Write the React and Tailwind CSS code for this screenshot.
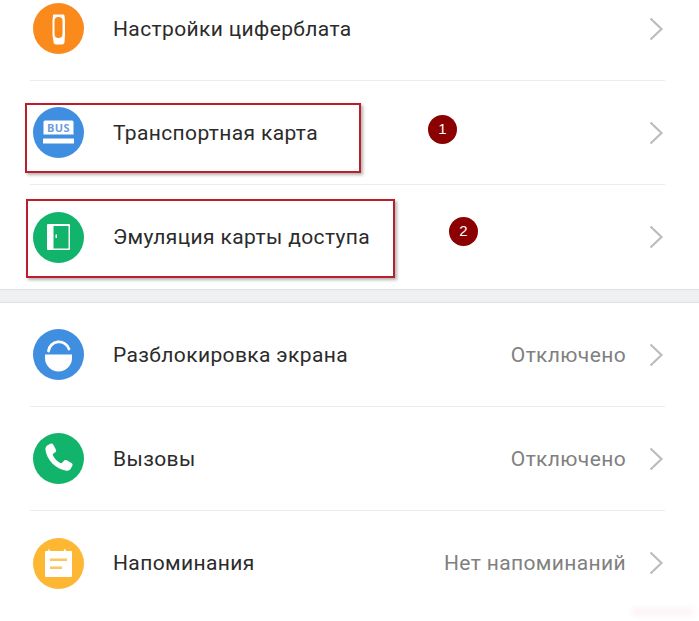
const BandIcon = () => (
  <svg width="51" height="51" viewBox="0 0 51 51">
    <path d="M21 11.500h9c1 0 1.500.6 1.500 1.500l.5 4v15l-.5 7c-.1 1.500-1 2.500-2.500 2.500h-6c-1.500 0-2.400-1-2.500-2.500L19.500 32V17l.5-4c0-.9 0-1.500 1-1.500z" fill="#fff" />
    <rect x="21.500" y="14" width="8" height="21" rx="4" fill="#fb8a1c" />
  </svg>
);

const BusIcon = () => (
  <svg width="51" height="51" viewBox="0 0 51 51">
    <path d="M10.500 15a1.500 1.500 0 0 1 1.500-1.500h27a1.500 1.500 0 0 1 1.500 1.500v12.500h-30z" fill="#fff" />
    <text x="25.500" y="25" textAnchor="middle" fontSize="11" fontWeight="700" fontFamily="'Open Sans', sans-serif" fill="#6d9fd8" letterSpacing="0.4">BUS</text>
    <rect x="10" y="31.500" width="31" height="5" rx="0.5" fill="#fff" />
  </svg>
);

const DoorIcon = () => (
  <svg width="51" height="51" viewBox="0 0 51 51">
    <rect x="14" y="12" width="23" height="26" rx="1" fill="#fff" />
    <path d="M20.500 14H35.500V36.500H20.500Z" fill="#12b36b" />
    <rect x="22.500" y="22.500" width="1.500" height="3.500" fill="#fff" />
  </svg>
);

const LockIcon = () => (
  <svg width="51" height="51" viewBox="0 0 51 51">
    <path d="M15.500 22a10.500 10 0 0 1 20.500-2" fill="none" stroke="#fff" strokeWidth="2.800" strokeLinecap="round" />
    <path d="M12 25.500H39V29a13.500 13.500 0 0 1-27 0z" fill="#fff" />
  </svg>
);

const PhoneIcon = () => (
  <svg width="51" height="51" viewBox="0 0 51 51">
    <path transform="translate(25.500 25) scale(1.15) translate(-26.300 -24.400)" d="M16.800 13.400l2.500-1.400c1-.5 1.900-.2 2.400.7l2.300 4.200c.5.900.3 1.800-.5 2.400l-1.800 1.400c-.4.300-.5.700-.3 1.200 1.500 3.200 3.800 5.500 6.900 7 .5.200.9.100 1.200-.3l1.500-1.800c.6-.7 1.500-.9 2.400-.4l4.200 2.400c.9.500 1.200 1.400.7 2.400l-1.400 2.500c-.7 1.200-2 1.900-3.600 1.700-9.500-1.300-17.300-9.400-18.400-18.400-.1-1.500.7-2.800 1.900-3.600z" fill="#fff" />
  </svg>
);

const NoteIcon = () => (
  <svg width="51" height="51" viewBox="0 0 51 51">
    <path d="M13 13h2l1-2.500 1 2.500h13.500l1.500-2.500 1 2.500h5a1 1 0 0 1 1 1v24a1 1 0 0 1-1 1H13a1 1 0 0 1-1-1V14a1 1 0 0 1 1-1z" fill="#fff" />
    <rect x="17" y="20.500" width="17" height="2.500" fill="#fdc55f" />
    <rect x="17" y="28.500" width="12" height="2.500" fill="#fdc55f" />
  </svg>
);

const Chevron = () => (
  <svg width="16" height="24" viewBox="0 0 16 24" className="shrink-0">
    <path d="M2.500 1.500L13.500 12L2.500 22.500" fill="none" stroke="#bcbcbc" strokeWidth="2.200" />
  </svg>
);

const Row = ({ icon, color, title, value, last }) => (
  <div className={`ml-[30px] mr-[34px] h-[104px] flex items-center ${last ? '' : 'border-b border-[#ececec]'}`}>
    <div className={`w-[51px] h-[51px] rounded-full ml-[3px] shrink-0 ${color}`}>{icon}</div>
    <span className="ml-[29px] pt-[2px] text-[21px] tracking-[0.37px] text-[#2b2b2b]">{title}</span>
    {value && <span className="ml-auto pt-[2px] text-[21px] tracking-[0.37px] text-[#808080]">{value}</span>}
    <div className={`mr-[1px] ${value ? 'ml-[22px]' : 'ml-auto'}`}><Chevron /></div>
  </div>
);

export default function App() {
  return (
    <div className="relative w-[699px] h-[621px] overflow-hidden bg-white font-['Roboto',sans-serif]">
      <div className="-mt-[23px]">
        <Row icon={<BandIcon />} color="bg-[#fb8a1c]" title="Настройки циферблата" />
        <Row icon={<BusIcon />} color="bg-[#408ee0]" title="Транспортная карта" />
        <Row icon={<DoorIcon />} color="bg-[#12b36b]" title="Эмуляция карты доступа" last />
      </div>
      <div className="h-[14px] bg-[#eff0f2] border-y border-[#dfe0e2]" />
      <Row icon={<LockIcon />} color="bg-[#408ee0]" title="Разблокировка экрана" value="Отключено" />
      <Row icon={<PhoneIcon />} color="bg-[#12b36b]" title="Вызовы" value="Отключено" />
      <Row icon={<NoteIcon />} color="bg-[#fdb733]" title="Напоминания" value="Нет напоминаний" last />

      {/* annotations drawn over the screenshot */}
      <div className="absolute left-[25px] top-[103px] w-[336px] h-[70px] border-2 border-[#b9202c] shadow-[2px_2px_3px_rgba(0,0,0,0.3)]" />
      <div className="absolute left-[26px] top-[199px] w-[369px] h-[79px] border-2 border-[#b9202c] shadow-[2px_2px_3px_rgba(0,0,0,0.3)]" />
      <div className="absolute left-[428px] top-[115px] w-[29px] h-[29px] rounded-full bg-[#8b0000] flex items-center justify-center text-[15px] text-white font-['Liberation_Sans',sans-serif]">1</div>
      <div className="absolute left-[449px] top-[217px] w-[29px] h-[29px] rounded-full bg-[#8b0000] flex items-center justify-center text-[15px] text-white font-['Liberation_Sans',sans-serif]">2</div>
      <div className="absolute left-[632px] top-[607px] w-[62px] h-[10px] bg-[#fdf6f9] blur-[2px]" />
    </div>
  );
}
